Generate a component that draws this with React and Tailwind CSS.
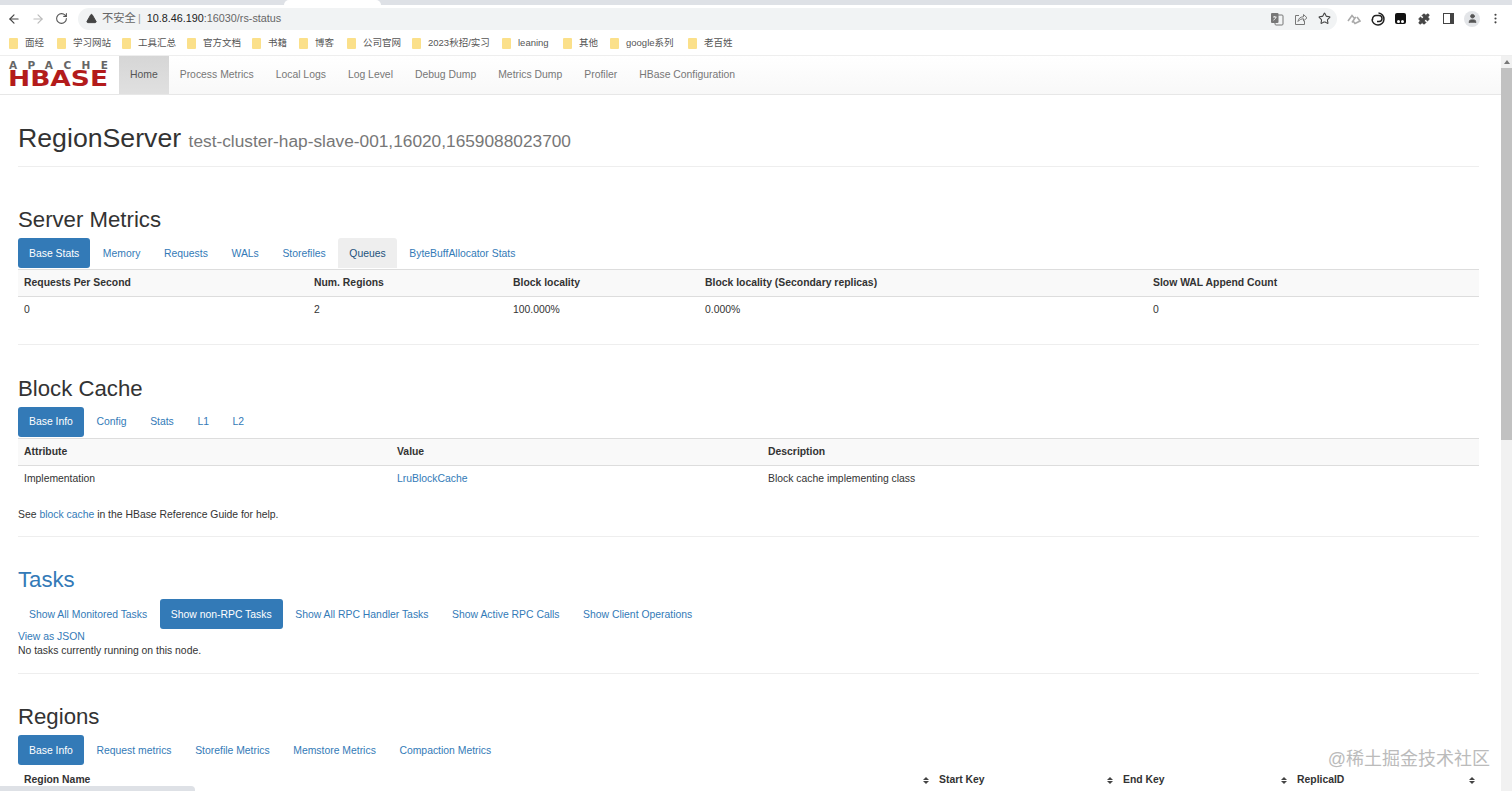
import { ArrowLeft, ArrowRight, RotateCw, TriangleAlert, Star, Puzzle, EllipsisVertical, User } from "lucide-react";

const bookmarks = [
  ["面经", "w-[48px]"],
  ["学习网站", "w-[65px]"],
  ["工具汇总", "w-[65px]"],
  ["官方文档", "w-[65px]"],
  ["书籍", "w-[47px]"],
  ["博客", "w-[48px]"],
  ["公司官网", "w-[65px]"],
  ["2023秋招/实习", "w-[90px]"],
  ["leaning", "w-[61px]"],
  ["其他", "w-[47px]"],
  ["google系列", "w-[78px]"],
  ["老百姓", "w-[60px]"],
];

const navItems = ["Process Metrics", "Local Logs", "Log Level", "Debug Dump", "Metrics Dump", "Profiler", "HBase Configuration"];

function TranslateIcon() {
  return (
    <svg width="14" height="14" viewBox="0 0 14 14" className="shrink-0">
      <rect x="5" y="3" width="8" height="10" rx="1" fill="none" stroke="#777" strokeWidth="1" />
      <rect x="1" y="1" width="7.5" height="10" rx="1" fill="#777" />
      <path d="M3 5h3.5M4.7 4v1M6 5c-.4 1.6-1.4 2.6-2.6 3.2" fill="none" stroke="#fff" strokeWidth="0.8" />
    </svg>
  );
}

function ShareIcon() {
  return (
    <svg width="14" height="14" viewBox="0 0 14 14" fill="none" stroke="#777" strokeWidth="1" className="shrink-0">
      <path d="M5 3.500H1.500v9h9V9" />
      <path d="M4 9.500c.3-3 2.400-4.700 5.500-4.700V2.500L13 5.800 9.500 9V6.800C7.500 6.800 5.500 7.600 4 9.500z" />
    </svg>
  );
}

function LinkCloudIcon() {
  return (
    <svg width="14" height="12" viewBox="0 0 14 12" fill="none" stroke="#aaa" strokeWidth="1.6" className="shrink-0">
      <path d="M1 8l4-5.500L8 6M5 9.500L8 5l1-1" />
      <path d="M6 8l2 2.500L13 8 10 4" />
    </svg>
  );
}

function SwirlIcon() {
  return (
    <svg width="14" height="14" viewBox="0 0 14 14" fill="none" stroke="#222" strokeWidth="1.500" className="shrink-0">
      <path d="M7.500 1a6 6 0 1 1-6.500 6.500" />
      <path d="M1.500 8V7a3.500 3.500 0 0 1 3.500-3.500h3a3 3 0 0 1 0 6H6" />
    </svg>
  );
}

function SidePanelIcon() {
  return (
    <div className="flex h-[11px] w-[11px] shrink-0 justify-end border-[1.5px] border-[#444]">
      <div className="h-full w-[3px] bg-[#444]" />
    </div>
  );
}

function ChromeBar() {
  return (
    <div className="flex flex-col shrink-0">
      <div className="flex h-[5px] bg-[#dee1e6]">
        <div className="ml-[284px] w-[97px] bg-white rounded-t-lg" />
      </div>
      <div className="flex items-center h-[26px] pt-[1px] bg-white text-[#5f6368]">
        <ArrowLeft className="ml-[7px] h-[14px] w-[14px] shrink-0 text-[#444]" />
        <ArrowRight className="ml-[10px] h-[14px] w-[14px] shrink-0 text-[#bbb]" />
        <RotateCw className="ml-[10px] h-[13px] w-[13px] shrink-0 text-[#555]" />
        <div className="ml-[10px] flex items-center h-[22px] w-[1259px] rounded-full bg-[#f1f3f4] pl-[8px] pr-[6px] text-[10.8px]">
          <TriangleAlert className="h-[11px] w-[11px] shrink-0 fill-[#444] text-[#444]" />
          <span className="ml-[5px] text-[11.3px] text-[#666]">不安全</span>
          <span className="ml-[2px] text-[#999]">|</span>
          <span className="ml-[6px] text-[#222]">10.8.46.190</span>
          <span className="text-[#666]">:16030/rs-status</span>
          <div className="ml-auto flex items-center gap-[10px]">
            <TranslateIcon />
            <ShareIcon />
            <Star className="h-[13px] w-[13px] text-[#444]" />
          </div>
        </div>
        <div className="ml-[10px]"><LinkCloudIcon /></div>
        <div className="ml-[10px]"><SwirlIcon /></div>
        <div className="ml-[10px] flex h-[11px] w-[11px] shrink-0 items-end justify-center gap-[1px] rounded-[2px] bg-[#111] pb-[1px]">
          <div className="h-[3px] w-[3px] rounded-full bg-white" />
          <div className="h-[3px] w-[3px] rounded-full bg-white" />
        </div>
        <Puzzle className="ml-[12px] h-[12px] w-[12px] shrink-0 fill-[#444] text-[#444]" />
        <div className="ml-[13px]"><SidePanelIcon /></div>
        <div className="ml-[10px] flex h-[16px] w-[16px] shrink-0 items-center justify-center rounded-full bg-[#e3e5e8]">
          <User className="h-[11px] w-[11px] fill-[#555] text-[#555]" />
        </div>
        <EllipsisVertical className="ml-[9px] h-[13px] w-[13px] shrink-0 text-[#444]" />
      </div>
      <div className="flex items-center h-[25px] pt-[1px] bg-white pl-[9px] text-[9.5px] text-[#555] border-b border-[#eeeeee]">
        {bookmarks.map(([name, w]) => (
          <div key={name} className={`flex items-center shrink-0 ${w}`}>
            <div className="h-[11px] w-[9px] shrink-0 rounded-[1px] bg-[#fbe08a]" />
            <span className="ml-[7px] whitespace-nowrap">{name}</span>
          </div>
        ))}
      </div>
    </div>
  );
}

function HBaseLogo() {
  return (
    <div className="w-[119px] shrink-0 pl-[8px]">
      <svg width="101" height="34" viewBox="0 0 101 34" className="block">
        <text x="1" y="11" fontFamily="DejaVu Sans, sans-serif" fontSize="10.500" fontWeight="700" fill="#666" textLength="99">APACHE</text>
        <text x="0" y="28" fontFamily="DejaVu Sans, sans-serif" fontSize="20.500" fontWeight="700" fill="#b31b1b" textLength="100" lengthAdjust="spacingAndGlyphs">HBASE</text>
      </svg>
    </div>
  );
}

function NavBar() {
  return (
    <div className="flex items-stretch h-[39px] shrink-0 border-b border-[#e7e7e7] bg-gradient-to-b from-white to-[#f8f8f8]">
      <div className="flex items-center bg-white">
        <HBaseLogo />
      </div>
      <a className="flex items-center px-[11px] bg-gradient-to-b from-[#d6d6d6] to-[#e0e0e0] text-[#555]">Home</a>
      {navItems.map((item) => (
        <a key={item} className="flex items-center px-[11px] text-[#777]">{item}</a>
      ))}
    </div>
  );
}

function Tabs({ items, active, muted }) {
  return (
    <div className="flex gap-[1.6px] h-[30px]">
      {items.map((item) => (
        <a
          key={item}
          className={
            item === active
              ? "flex items-center px-[11px] pt-[1px] rounded-[3px] bg-[#337ab7] text-white"
              : item === muted
                ? "flex items-center px-[11px] pt-[1px] rounded-t-[3px] bg-[#eeeeee] text-[#23527c]"
                : "flex items-center px-[11px] pt-[1px] rounded-[3px] text-[#337ab7]"
          }
        >
          {item}
        </a>
      ))}
    </div>
  );
}

function Heading({ children, className = "text-[#333]" }) {
  return <h2 className={`text-[22.2px] leading-[26px] ${className}`}>{children}</h2>;
}

function DataTable({ cols, head, row }) {
  return (
    <table className="w-full table-fixed border-collapse mt-[1px]">
      <thead>
        <tr className="h-[27px] bg-[#f9f9f9] border-y border-[#dddddd]">
          {head.map((h, i) => (
            <th key={h} className={`px-[6px] text-left font-bold ${cols[i]}`}>{h}</th>
          ))}
        </tr>
      </thead>
      <tbody>
        <tr className="h-[27px]">
          {row.map((c, i) => (
            <td key={i} className={`px-[6px] ${c === "LruBlockCache" ? "text-[#337ab7]" : ""}`}>{c}</td>
          ))}
        </tr>
      </tbody>
    </table>
  );
}

function Sort() {
  return (
    <span className="flex flex-col items-center gap-[1px]">
      <span className="h-0 w-0 border-x-[3px] border-b-[3.5px] border-x-transparent border-b-[#444]" />
      <span className="h-0 w-0 border-x-[3px] border-t-[3.5px] border-x-transparent border-t-[#444]" />
    </span>
  );
}

function RegionHead({ name, className }) {
  return (
    <div className={`flex items-center justify-between pl-[6px] pr-[4px] font-bold ${className}`}>
      <span>{name}</span>
      <Sort />
    </div>
  );
}

function PageBody() {
  return (
    <div className="flex-1 min-w-0 overflow-hidden px-[18px] pr-[22px] leading-[16px] text-[#333]">
      <div className="mt-[27px] h-[45px] border-b border-[#eeeeee] flex items-baseline">
        <h1 className="text-[26.7px] leading-[32px] whitespace-nowrap">
          RegionServer <small className="text-[17.3px] text-[#777]">test-cluster-hap-slave-001,16020,1659088023700</small>
        </h1>
      </div>

      <section className="mt-[40px]">
        <Heading>Server Metrics</Heading>
        <div className="mt-[5px]">
          <Tabs items={["Base Stats", "Memory", "Requests", "WALs", "Storefiles", "Queues", "ByteBuffAllocator Stats"]} active="Base Stats" muted="Queues" />
        </div>
        <DataTable
          cols={["w-[290px]", "w-[199px]", "w-[192px]", "w-[448px]", ""]}
          head={["Requests Per Second", "Num. Regions", "Block locality", "Block locality (Secondary replicas)", "Slow WAL Append Count"]}
          row={["0", "2", "100.000%", "0.000%", "0"]}
        />
        <hr className="mt-[20px] border-[#eeeeee]" />
      </section>

      <section className="mt-[31px]">
        <Heading>Block Cache</Heading>
        <div className="mt-[5px]">
          <Tabs items={["Base Info", "Config", "Stats", "L1", "L2"]} active="Base Info" />
        </div>
        <DataTable
          cols={["w-[373px]", "w-[371px]", ""]}
          head={["Attribute", "Value", "Description"]}
          row={["Implementation", "LruBlockCache", "Block cache implementing class"]}
        />
        <p className="mt-[15px]">
          See <a className="text-[#337ab7]">block cache</a> in the HBase Reference Guide for help.
        </p>
        <hr className="mt-[13px] border-[#eeeeee]" />
      </section>

      <section className="mt-[30px]">
        <Heading className="text-[#337ab7]">Tasks</Heading>
        <div className="mt-[6px]">
          <Tabs items={["Show All Monitored Tasks", "Show non-RPC Tasks", "Show All RPC Handler Tasks", "Show Active RPC Calls", "Show Client Operations"]} active="Show non-RPC Tasks" />
        </div>
        <a className="block mt-[1px] text-[#337ab7] leading-[14px]">View as JSON</a>
        <p className="leading-[13px]">No tasks currently running on this node.</p>
        <hr className="mt-[16px] border-[#eeeeee]" />
      </section>

      <section className="mt-[30px]">
        <Heading>Regions</Heading>
        <div className="mt-[5px]">
          <Tabs items={["Base Info", "Request metrics", "Storefile Metrics", "Memstore Metrics", "Compaction Metrics"]} active="Base Info" />
        </div>
        <div className="mt-[7px] flex h-[16px]">
          <RegionHead name="Region Name" className="w-[915px]" />
          <RegionHead name="Start Key" className="w-[184px]" />
          <RegionHead name="End Key" className="w-[174px]" />
          <RegionHead name="ReplicaID" className="w-[188px]" />
        </div>
      </section>
    </div>
  );
}

function Scrollbar() {
  return (
    <div className="flex flex-col items-center w-[11px] shrink-0 bg-[#f1f1f1]">
      <div className="mt-[4px] h-0 w-0 border-x-[3px] border-b-[4px] border-x-transparent border-b-[#777]" />
      <div className="mt-[4px] h-[372px] w-full bg-[#c1c1c1]" />
    </div>
  );
}

export default function App() {
  return (
    <div className="relative flex flex-col h-[791px] w-full overflow-hidden bg-white font-['Liberation_Sans','Noto_Sans_CJK_SC',sans-serif]">
      <ChromeBar />
      <div className="flex flex-1 min-h-0 text-[10.4px]">
        <div className="flex flex-col flex-1 min-w-0">
          <NavBar />
          <PageBody />
        </div>
        <Scrollbar />
      </div>
      <div className="absolute left-0 bottom-0 h-[5px] w-[195px] rounded-tr bg-[#dee1e6]" />
      <div className="absolute right-[22px] bottom-[22px] text-[18px] leading-[20px] text-[#bbbbbb]">@稀土掘金技术社区</div>
    </div>
  );
}
